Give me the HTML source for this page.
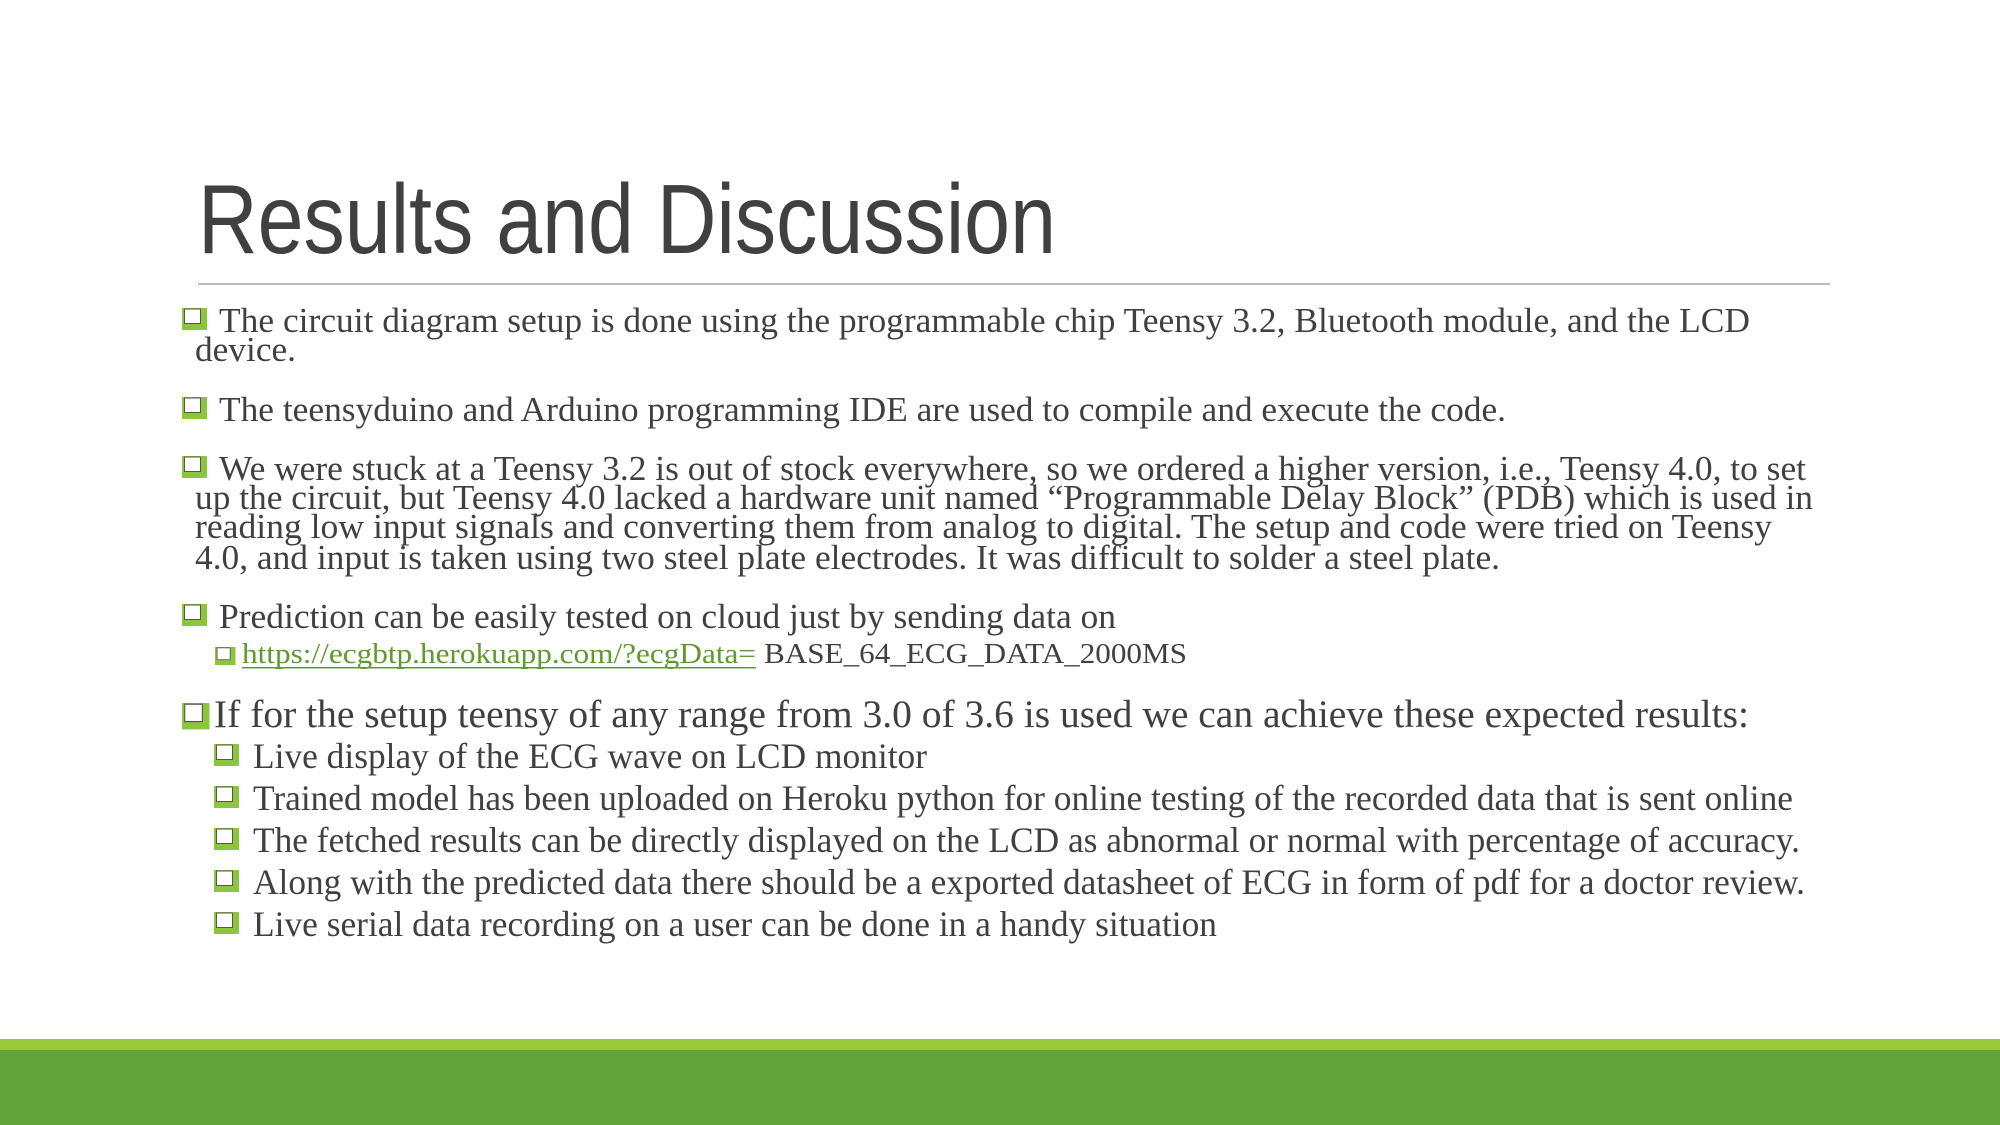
<!DOCTYPE html>
<html><head><meta charset="utf-8"><style>
html,body{margin:0;padding:0;background:#fff;width:2000px;height:1125px;overflow:hidden}
svg{display:block}
text{font-family:"Liberation Serif",serif;fill:#404040}
</style></head><body>
<svg width="2000" height="1125" viewBox="0 0 2000 1125" xmlns="http://www.w3.org/2000/svg">
<defs>
<g id="b">
<rect x="0" y="0" width="25" height="22" fill="#8cc63f"/>
<rect x="2.5" y="1" width="16" height="14.5" fill="#fff" stroke="#555" stroke-width="1"/>
</g>
</defs>
<text x="198" y="253" font-size="98" textLength="858" lengthAdjust="spacingAndGlyphs" style="font-family:'Liberation Sans',sans-serif">Results and Discussion</text>
<rect x="198" y="283" width="1632" height="2" fill="#bdbdbd"/>

<use href="#b" x="182" y="308"/>
<text x="219" y="332" font-size="35" textLength="1531" lengthAdjust="spacingAndGlyphs">The circuit diagram setup is done using the programmable chip Teensy 3.2, Bluetooth module, and the LCD</text>
<text x="195" y="361" font-size="35" textLength="101" lengthAdjust="spacingAndGlyphs">device.</text>

<use href="#b" x="182" y="397"/>
<text x="219" y="421" font-size="35" textLength="1287" lengthAdjust="spacingAndGlyphs">The teensyduino and Arduino programming IDE are used to compile and execute the code.</text>

<use href="#b" x="182" y="456"/>
<text x="219" y="480" font-size="35" textLength="1587" lengthAdjust="spacingAndGlyphs">We were stuck at a Teensy 3.2 is out of stock everywhere, so we ordered a higher version, i.e., Teensy 4.0, to set</text>
<text x="195" y="509" font-size="35" textLength="1618" lengthAdjust="spacingAndGlyphs">up the circuit, but Teensy 4.0 lacked a hardware unit named “Programmable Delay Block” (PDB) which is used in</text>
<text x="195" y="538" font-size="35" textLength="1577" lengthAdjust="spacingAndGlyphs">reading low input signals and converting them from analog to digital.  The setup and code were tried on Teensy</text>
<text x="195" y="569" font-size="35" textLength="1305" lengthAdjust="spacingAndGlyphs">4.0, and input is taken using two steel plate electrodes. It was difficult to solder a steel plate.</text>

<use href="#b" x="182" y="604"/>
<text x="219" y="628" font-size="35" textLength="897" lengthAdjust="spacingAndGlyphs">Prediction can be easily tested on cloud just by sending data on</text>

<g transform="translate(215,647) scale(0.82)"><use href="#b"/></g>
<text x="242" y="663" font-size="28" textLength="514" lengthAdjust="spacingAndGlyphs" style="fill:#5f9a2e">https://ecgbtp.herokuapp.com/?ecgData=</text>
<rect x="242" y="667" width="514" height="1.5" fill="#5f9a2e"/>
<text x="764" y="663" font-size="28" textLength="423" lengthAdjust="spacingAndGlyphs">BASE_64_ECG_DATA_2000MS</text>

<g transform="translate(182,703) scale(1.1,1.2)"><use href="#b"/></g>
<text x="214" y="727" font-size="39" textLength="1535" lengthAdjust="spacingAndGlyphs">If for the setup teensy of any range from 3.0 of 3.6 is used we can achieve these expected results:</text>

<use href="#b" x="214" y="744"/>
<text x="253" y="768" font-size="36" textLength="674" lengthAdjust="spacingAndGlyphs">Live display of the ECG wave on LCD monitor</text>
<use href="#b" x="214" y="786"/>
<text x="253" y="810" font-size="36" textLength="1540" lengthAdjust="spacingAndGlyphs">Trained model has been uploaded on Heroku python for online testing of the recorded data that is sent online</text>
<use href="#b" x="214" y="828"/>
<text x="253" y="852" font-size="36" textLength="1547" lengthAdjust="spacingAndGlyphs">The fetched results can be directly displayed on the LCD as abnormal or normal with percentage of accuracy.</text>
<use href="#b" x="214" y="870"/>
<text x="253" y="894" font-size="36" textLength="1552" lengthAdjust="spacingAndGlyphs">Along with the predicted data there should be a exported datasheet of ECG in form of pdf for a doctor review.</text>
<use href="#b" x="214" y="912"/>
<text x="253" y="936" font-size="36" textLength="964" lengthAdjust="spacingAndGlyphs">Live serial data recording on a user can be done in a handy situation</text>

<rect x="0" y="1039" width="2000" height="11" fill="#99ca3c"/>
<rect x="0" y="1050" width="2000" height="75" fill="#62a33a"/>
</svg>
</body></html>
